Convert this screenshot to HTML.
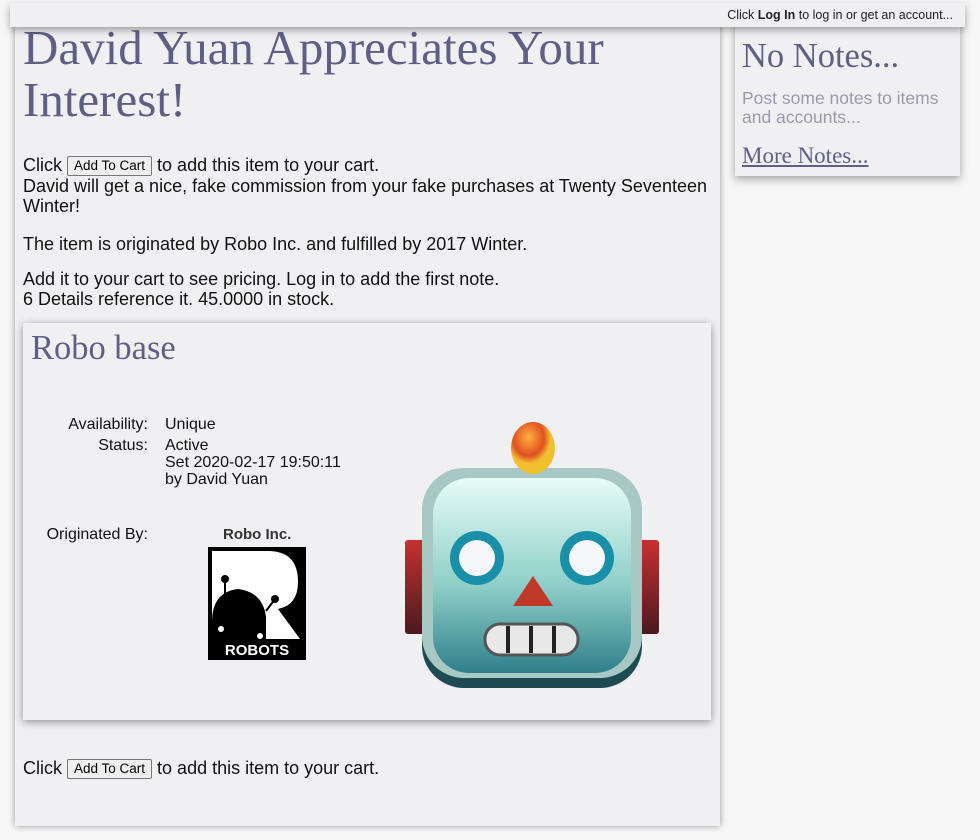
<!DOCTYPE html>
<html><head><meta charset="utf-8"><style>
body{margin:0;width:980px;height:840px;background:#f6f6f7;font-family:"Liberation Sans",sans-serif;position:relative;overflow:hidden;color:#111}
.top{position:absolute;left:10px;top:3px;width:955px;height:24px;background:#f0f0f2;box-shadow:0 3px 8px rgba(0,0,0,.35);z-index:5;font-size:12.5px;text-align:right;line-height:24px;box-sizing:border-box;padding-right:12px;color:#222}
.main{position:absolute;left:15px;top:20px;width:705px;height:806px;background:#f0f0f2;box-shadow:0 0 6px rgba(0,0,0,.4)}
.side{position:absolute;left:735px;top:20px;width:225px;height:156px;background:#f0f0f2;box-shadow:0 3px 8px rgba(0,0,0,.35)}
h1{font-family:"Liberation Serif",serif;font-weight:normal;color:#5f5f85;font-size:49px;line-height:52px;margin:0;position:absolute;left:8px;top:2px;width:660px}
p{margin:0;font-size:18px;line-height:20px;position:absolute;left:8px;width:690px}
button{font-family:"Liberation Sans",sans-serif;font-size:13.5px;padding:1px 6px;border:1px solid #777;border-radius:2px;background:#efefef;height:20px;vertical-align:1px}
.card{position:absolute;left:8px;top:303px;width:688px;height:397px;background:#f0f0f2;box-shadow:0 2px 8px rgba(0,0,0,.4)}
.card h2{font-family:"Liberation Serif",serif;font-weight:normal;color:#5f5f85;font-size:34.5px;margin:0;position:absolute;left:8px;top:6px}
.l{position:absolute;font-size:16px;text-align:right;width:125px;left:0}
.v{position:absolute;font-size:16px;left:142px;line-height:17px}
</style></head><body>
<div class="top">Click <b>Log In</b> to log in or get an account...</div>
<div class="main">
<h1>David Yuan Appreciates Your Interest!</h1>
<p style="top:135px">Click <button>Add To Cart</button> to add this item to your cart.<br>David will get a nice, fake commission from your fake purchases at Twenty Seventeen Winter!</p>
<p style="top:214px">The item is originated by Robo Inc. and fulfilled by 2017 Winter.</p>
<p style="top:249px">Add it to your cart to see pricing. Log in to add the first note.<br>6 Details reference it. 45.0000 in stock.</p>
<div class="card">
<h2>Robo base</h2>
<div class="l" style="top:93px">Availability:</div><div class="v" style="top:93px">Unique</div>
<div class="l" style="top:114px">Status:</div><div class="v" style="top:114px">Active<br>Set 2020-02-17 19:50:11<br>by David Yuan</div>
<div class="l" style="top:203px">Originated By:</div>
<div style="position:absolute;left:200px;top:203px;font-size:15px;font-weight:bold;color:#333">Robo Inc.</div>
<svg style="position:absolute;left:185px;top:224px" width="98" height="113" viewBox="0 0 98 113">
<rect width="98" height="113" fill="#000"/>
<path d="M4 4H60Q90 4 90 35Q90 58 70 62L92 92H4Z" fill="#fff"/>
<path d="M4 75Q4 45 30 42Q55 45 58 70L58 92H4Z" fill="#000"/>
<circle cx="17" cy="32" r="4" fill="#000"/><line x1="17" y1="32" x2="17" y2="48" stroke="#000" stroke-width="2"/>
<circle cx="67" cy="52" r="4" fill="#000"/><line x1="67" y1="52" x2="58" y2="64" stroke="#000" stroke-width="2"/>
<circle cx="13" cy="82" r="3" fill="#fff"/><circle cx="52" cy="89" r="3" fill="#fff"/>
<text x="49" y="108" font-family="Liberation Sans" font-weight="bold" font-size="15" fill="#fff" text-anchor="middle">ROBOTS</text>
</svg>
<svg style="position:absolute;left:382px;top:95px" width="256" height="272" viewBox="0 0 256 272">
<defs>
<linearGradient id="f" x1="0" y1="0" x2="0" y2="1"><stop offset="0" stop-color="#e6fbf6"/><stop offset=".55" stop-color="#8fcfc9"/><stop offset="1" stop-color="#2f7f8a"/></linearGradient>
<linearGradient id="e" x1="0" y1="0" x2="0" y2="1"><stop offset="0" stop-color="#c83030"/><stop offset="1" stop-color="#4a1a20"/></linearGradient>
<radialGradient id="b" cx=".4" cy=".3"><stop offset="0" stop-color="#ffb040"/><stop offset=".7" stop-color="#e05020"/><stop offset="1" stop-color="#f0c030"/></radialGradient>
</defs>
<rect x="0" y="122" width="26" height="94" rx="3" fill="url(#e)"/>
<rect x="228" y="122" width="26" height="94" rx="3" fill="url(#e)"/>
<path d="M100 60Q128 35 156 60Z" fill="#2a1c2c"/>
<rect x="17" y="52" width="220" height="218" rx="42" fill="#1e4a52"/>
<rect x="17" y="50" width="220" height="210" rx="42" fill="#a8c8c4"/>
<rect x="28" y="60" width="198" height="195" rx="36" fill="url(#f)"/>
<ellipse cx="128" cy="30" rx="22" ry="26" fill="url(#b)"/>
<circle cx="72" cy="140" r="27" fill="#1a8fa8"/><circle cx="72" cy="140" r="18" fill="#f4f6fa"/>
<circle cx="182" cy="140" r="27" fill="#1a8fa8"/><circle cx="182" cy="140" r="18" fill="#f4f6fa"/>
<path d="M128 158L108 188H148Z" fill="#c03828"/>
<rect x="80" y="206" width="93" height="31" rx="15" fill="#e8e8e8" stroke="#555" stroke-width="3"/>
<path d="M103 208V235M126 208V235M149 208V235" stroke="#222" stroke-width="4"/>
</svg>
</div>
<p style="top:738px">Click <button>Add To Cart</button> to add this item to your cart.</p>
</div>
<div class="side">
<div style="position:absolute;left:7px;top:17px;font-family:'Liberation Serif',serif;font-size:34.5px;color:#5f5f85">No Notes...</div>
<div style="position:absolute;left:7px;top:69px;font-size:17.5px;line-height:19px;color:#9a9aaa;width:215px">Post some notes to items and accounts...</div>
<div style="position:absolute;left:7px;top:123px;font-family:'Liberation Serif',serif;font-size:23px;color:#5f5f85;text-decoration:underline">More Notes...</div>
</div>
</body></html>
